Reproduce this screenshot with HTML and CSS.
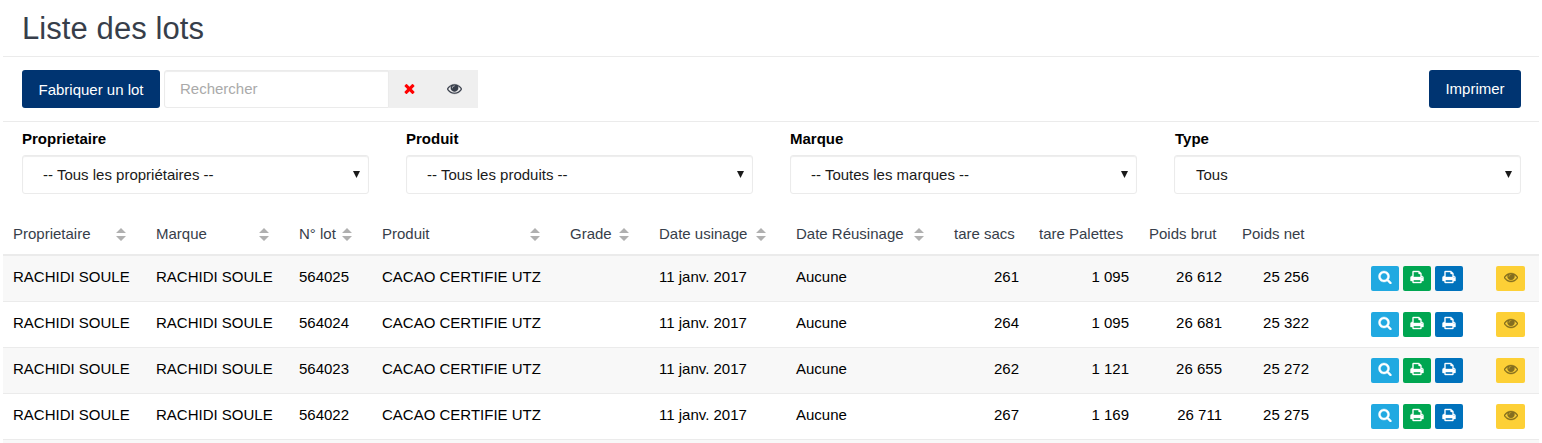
FILE: index.html
```html
<!DOCTYPE html>
<html lang="fr">
<head>
<meta charset="utf-8">
<title>Liste des lots</title>
<link rel="stylesheet" href="styles.css">
</head>
<body>
<svg class="sprite" aria-hidden="true">
  <symbol id="eye" viewBox="0 0 1792 1792"><path d="M1664 960q-152-236-381-353 61 104 61 225 0 185-131.5 316.5t-316.5 131.5-316.5-131.5-131.5-316.5q0-121 61-225-229 117-381 353 133 205 333.5 326.5t434.5 121.5 434.5-121.5 333.5-326.5zm-720-384q0-20-14-34t-34-14q-125 0-214.5 89.5t-89.5 214.5q0 20 14 34t34 14 34-14 14-34q0-86 61-147t147-61q20 0 34-14t14-34zm848 384q0 34-20 69-140 230-376.5 368.5t-499.5 138.5-499.5-139-376.5-368q-20-35-20-69t20-69q140-229 376.5-368t499.5-139 499.5 139 376.5 368q20 35 20 69z"/></symbol>
  <symbol id="print" viewBox="0 0 1792 1792"><path d="M448 1536h896v-256h-896v256zm0-640h896v-384h-160q-40 0-68-28t-28-68v-160h-640v640zm1152 64q0-26-19-45t-45-19-45 19-19 45 19 45 45 19 45-19 19-45zm128 0v416q0 13-9.500 22.500t-22.500 9.500h-224v160q0 40-28 68t-68 28h-960q-40 0-68-28t-28-68v-160h-224q-13 0-22.500-9.500t-9.500-22.500v-416q0-79 56.500-135.500t135.500-56.500h64v-544q0-40 28-68t68-28h672q40 0 88 20t76 48l152 152q28 28 48 76t20 88v256h64q79 0 135.500 56.500t56.500 135.500z"/></symbol>
  <symbol id="search" viewBox="0 0 1792 1792"><path d="M1216 832q0-185-131.500-316.500t-316.500-131.500-316.500 131.500-131.500 316.500 131.500 316.500 316.500 131.500 316.500-131.500 131.500-316.500zm512 832q0 52-38 90t-90 38q-54 0-90-38l-343-342q-179 124-399 124-143 0-273.500-55.500t-225-150-150-225-55.500-273.500 55.500-273.500 150-225 225-150 273.500-55.500 273.500 55.500 225 150 150 225 55.500 273.500q0 220-124 399l343 343q37 37 37 90z"/></symbol>
  <symbol id="times" viewBox="0 0 1792 1792"><path d="M1490 1322q0 40-28 68l-136 136q-28 28-68 28t-68-28l-294-294-294 294q-28 28-68 28t-68-28l-136-136q-28-28-28-68t28-68l294-294-294-294q-28-28-28-68t28-68l136-136q28-28 68-28t68 28l294 294 294-294q28-28 68-28t68 28l136 136q28 28 28 68t-28 68l-294 294 294 294q28 28 28 68z"/></symbol>
  <symbol id="sort" viewBox="0 0 10 13"><path d="M5 0l5 5H0zM0 8h10l-5 5z"/></symbol>
  <symbol id="caret" viewBox="0 0 7 7"><path d="M0 0h7L3.500 7z"/></symbol>
</svg>
<main class="panel">
  <header class="title-bar"><h1 class="title">Liste des lots</h1></header>
  <div class="toolbar">
    <button class="btn btn-make">Fabriquer un lot</button>
    <div class="search">
      <input class="search-input" type="text" placeholder="Rechercher">
      <span class="addon addon-clear"><svg class="icon-md"><use href="#times"/></svg></span>
      <span class="addon"><svg class="icon-md icon-bold"><use href="#eye"/></svg></span>
    </div>
    <button class="btn btn-print">Imprimer</button>
  </div>
  <div class="filters">
    <div class="filter"><span class="label">Proprietaire</span><div class="select">-- Tous les propriétaires --<svg class="caret"><use href="#caret"/></svg></div></div>
    <div class="filter"><span class="label">Produit</span><div class="select">-- Tous les produits --<svg class="caret"><use href="#caret"/></svg></div></div>
    <div class="filter"><span class="label">Marque</span><div class="select">-- Toutes les marques --<svg class="caret"><use href="#caret"/></svg></div></div>
    <div class="filter"><span class="label label-type">Type</span><div class="select select-type">Tous<svg class="caret"><use href="#caret"/></svg></div></div>
  </div>
  <table class="lots">
    <colgroup>
      <col class="c-owner"><col class="c-owner"><col class="c-lot"><col class="c-product"><col class="c-grade"><col class="c-date"><col class="c-redate"><col class="c-bags"><col class="c-pallets"><col class="c-gross"><col class="c-net"><col class="c-actions"><col class="c-view">
    </colgroup>
    <thead>
      <tr>
        <th><div class="sortable">Proprietaire<svg class="sort"><use href="#sort"/></svg></div></th>
        <th><div class="sortable">Marque<svg class="sort"><use href="#sort"/></svg></div></th>
        <th><div class="sortable">N° lot<svg class="sort"><use href="#sort"/></svg></div></th>
        <th><div class="sortable">Produit<svg class="sort"><use href="#sort"/></svg></div></th>
        <th><div class="sortable">Grade<svg class="sort"><use href="#sort"/></svg></div></th>
        <th><div class="sortable">Date usinage<svg class="sort"><use href="#sort"/></svg></div></th>
        <th><div class="sortable">Date Réusinage<svg class="sort"><use href="#sort"/></svg></div></th>
        <th>tare sacs</th><th>tare Palettes</th><th>Poids brut</th><th>Poids net</th><th></th><th></th>
      </tr>
    </thead>
    <tbody>
      <tr>
        <td>RACHIDI SOULE</td><td>RACHIDI SOULE</td><td>564025</td><td>CACAO CERTIFIE UTZ</td><td></td><td>11 janv. 2017</td><td>Aucune</td>
        <td class="num">261</td><td class="num">1 095</td><td class="num">26 612</td><td class="num">25 256</td>
        <td><div class="actions"><a class="act act-info"><svg class="icon"><use href="#search"/></svg></a><a class="act act-green"><svg class="icon"><use href="#print"/></svg></a><a class="act act-blue"><svg class="icon"><use href="#print"/></svg></a></div></td>
        <td class="view"><div class="actions"><a class="act act-view"><svg class="icon"><use href="#eye"/></svg></a></div></td>
      </tr>
      <tr>
        <td>RACHIDI SOULE</td><td>RACHIDI SOULE</td><td>564024</td><td>CACAO CERTIFIE UTZ</td><td></td><td>11 janv. 2017</td><td>Aucune</td>
        <td class="num">264</td><td class="num">1 095</td><td class="num">26 681</td><td class="num">25 322</td>
        <td><div class="actions"><a class="act act-info"><svg class="icon"><use href="#search"/></svg></a><a class="act act-green"><svg class="icon"><use href="#print"/></svg></a><a class="act act-blue"><svg class="icon"><use href="#print"/></svg></a></div></td>
        <td class="view"><div class="actions"><a class="act act-view"><svg class="icon"><use href="#eye"/></svg></a></div></td>
      </tr>
      <tr>
        <td>RACHIDI SOULE</td><td>RACHIDI SOULE</td><td>564023</td><td>CACAO CERTIFIE UTZ</td><td></td><td>11 janv. 2017</td><td>Aucune</td>
        <td class="num">262</td><td class="num">1 121</td><td class="num">26 655</td><td class="num">25 272</td>
        <td><div class="actions"><a class="act act-info"><svg class="icon"><use href="#search"/></svg></a><a class="act act-green"><svg class="icon"><use href="#print"/></svg></a><a class="act act-blue"><svg class="icon"><use href="#print"/></svg></a></div></td>
        <td class="view"><div class="actions"><a class="act act-view"><svg class="icon"><use href="#eye"/></svg></a></div></td>
      </tr>
      <tr>
        <td>RACHIDI SOULE</td><td>RACHIDI SOULE</td><td>564022</td><td>CACAO CERTIFIE UTZ</td><td></td><td>11 janv. 2017</td><td>Aucune</td>
        <td class="num">267</td><td class="num">1 169</td><td class="num">26 711</td><td class="num">25 275</td>
        <td><div class="actions"><a class="act act-info"><svg class="icon"><use href="#search"/></svg></a><a class="act act-green"><svg class="icon"><use href="#print"/></svg></a><a class="act act-blue"><svg class="icon"><use href="#print"/></svg></a></div></td>
        <td class="view"><div class="actions"><a class="act act-view"><svg class="icon"><use href="#eye"/></svg></a></div></td>
      </tr>
    </tbody>
  </table>
  <div class="next-row"></div>
</main>
</body>
</html>
```

FILE: styles.css
```css
* { box-sizing: border-box; }

body {
  margin: 0;
  height: 443px;
  overflow: hidden;
  background: #fff;
  color: #000;
  font: 15px/22px "Liberation Sans", Arial, sans-serif;
}

svg { display: block; flex: none; fill: currentColor; }
.sprite { display: none; }

.panel { width: 1536px; margin: 0 3px; }

.title-bar { height: 57px; padding: 12px 19px 0; border-bottom: 1px solid #ebebeb; }
.title { margin: 0; font-size: 31px; line-height: 34px; font-weight: 400; letter-spacing: .08px; color: #373e4a; }

.toolbar {
  display: flex;
  height: 65px;
  padding: 13px 18px 0 19px;
  gap: 4px;
  border-bottom: 1px solid #ebebeb;
}
.btn {
  height: 38px;
  padding: 0;
  border: 0;
  border-radius: 3px;
  background: #003471;
  color: #fff;
  font: inherit;
  white-space: nowrap;
}
.btn-make { width: 138px; padding-top: 2px; }
.btn-print { width: 92px; margin-left: auto; }

.search { display: flex; width: 314px; height: 38px; }
.search-input {
  width: 225px;
  height: 38px;
  padding: 0 15px 2px;
  border: 1px solid #ebebeb;
  border-radius: 3px 0 0 3px;
  box-shadow: inset 0 1px 1px rgba(0, 0, 0, .075);
  font: inherit;
}
.search-input::placeholder { color: #aaa; opacity: 1; }
.addon {
  display: flex;
  width: 47px;
  justify-content: center;
  align-items: center;
  padding-bottom: 1px;
  background: #efefef;
  color: #373e4a;
}
.addon-clear { width: 42px; padding-right: 1px; color: #f00; }
.icon-md { width: 15px; height: 15px; }
.icon-bold { stroke: currentColor; stroke-width: 30px; }

.filters { display: grid; grid-template-columns: repeat(4, 384px); height: 89px; }
.filter { padding: 6px 18px 0 19px; }
.label { display: block; height: 27px; font-weight: 700; }
.label-type { padding-left: 1px; }
.select {
  display: flex;
  justify-content: space-between;
  align-items: center;
  height: 39px;
  padding: 0 8px 0 20px;
  border: 1px solid #ebebeb;
  border-radius: 3px;
  box-shadow: inset 0 1px 1px rgba(0, 0, 0, .075);
  color: #1a1a1a;
}
.select-type { padding-left: 21px; }
.caret { width: 7px; height: 7px; }

.lots { width: 1536px; table-layout: fixed; border-collapse: separate; border-spacing: 0; }
.c-owner { width: 143px; }
.c-lot { width: 83px; }
.c-product { width: 188px; }
.c-grade { width: 89px; }
.c-date { width: 137px; }
.c-redate { width: 158px; }
.c-bags { width: 85px; }
.c-pallets { width: 110px; }
.c-gross { width: 93px; }
.c-net { width: 87px; }
.c-actions { width: 154px; }
.c-view { width: 66px; }

.lots th {
  height: 45px;
  padding: 2px 0 0 10px;
  border-bottom: 2px solid #ebebeb;
  text-align: left;
  vertical-align: middle;
  font-weight: 400;
  color: #373e4a;
  white-space: nowrap;
}
.sortable { display: flex; justify-content: space-between; align-items: center; padding-right: 20px; }
.sort { width: 10px; height: 13px; margin-top: 2px; color: #b0b0b0; }

.lots td {
  height: 46px;
  padding: 10px;
  border-bottom: 1px solid #ebebeb;
  vertical-align: top;
  white-space: nowrap;
}
.lots tbody tr:nth-child(odd) { background: #f8f8f8; }
.lots .num { text-align: right; }
.lots .view { padding-right: 14px; }

.actions { display: flex; justify-content: flex-end; gap: 4px; }
.act {
  display: flex;
  justify-content: center;
  width: 28px;
  height: 25px;
  padding-top: 4px;
  border-radius: 2px;
  color: #fff;
}
.act-info { background: #21a9e1; }
.act-green { background: #00a651; }
.act-blue { background: #0072bc; }
.act-view { width: 29px; background: #fdd036; color: #846e20; }
.icon { width: 14px; height: 14px; stroke: currentColor; stroke-width: 50px; }

.next-row { height: 3px; background: #f8f8f8; }
```
